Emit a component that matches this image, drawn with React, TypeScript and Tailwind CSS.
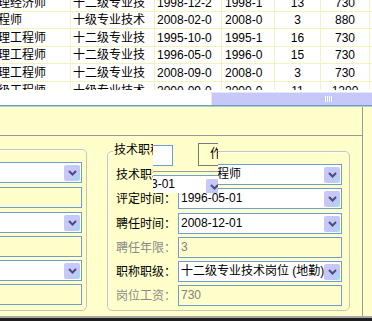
import React from "react";

const rows = [
  ["理经济师", "十二级专业技", "1998-12-2", "1998-1", "13", "730"],
  ["程师", "十级专业技术", "2008-02-0", "2008-0", "3", "880"],
  ["理工程师", "十二级专业技", "1995-10-0", "1995-1", "16", "730"],
  ["理工程师", "十二级专业技", "1996-05-0", "1996-0", "15", "730"],
  ["理工程师", "十二级专业技", "2008-09-0", "2008-0", "3", "730"],
  ["级工程师", "十级专业技术", "2000-09-0", "2000-0", "11", "1200"],
];
const rowH = ["h-[18px]", "h-[17px]", "h-[18px]", "h-[17px]", "h-[18px]", "h-[18px]"];

function DropBtn() {
  return (
    <div className="w-[16px] h-[16px] shrink-0 rounded-[2px] bg-[linear-gradient(135deg,#c9cbf9_0%,#c3c6f7_62%,#9fdcf6_100%)] flex items-center justify-center">
      <svg width="9" height="6" viewBox="0 0 9 6">
        <path d="M1 1 L4.5 4.5 L8 1" stroke="#4c4c7c" strokeWidth="2" fill="none" />
      </svg>
    </div>
  );
}

function Combo({ text, className = "" }: { text?: string; className?: string }) {
  return (
    <div className={"h-[21px] border border-[#6f9dd0] bg-white flex items-center pl-[2px] pr-[1px] " + className}>
      <span className="flex-1 overflow-hidden whitespace-nowrap leading-[19px]">{text}</span>
      <DropBtn />
    </div>
  );
}

function Box({ text, className = "" }: { text?: string; className?: string }) {
  return (
    <div className={"h-[21px] border border-[#6f9dd0] bg-[#ffffcc] flex items-center pl-[2px] text-[#808080] " + className}>
      <span className="leading-[19px]">{text}</span>
    </div>
  );
}

function Label({ text, gray }: { text: string; gray?: boolean }) {
  return (
    <div className={"w-[62px] shrink-0 whitespace-nowrap overflow-hidden " + (gray ? "text-[#8a8a8a]" : "text-black")}>{text}</div>
  );
}

export default function App() {
  return (
    <div className="w-[372px] h-[321px] overflow-hidden relative bg-[#ffffcc] text-[12px] text-black font-['Liberation_Sans','Noto_Sans_CJK_SC',sans-serif]">
      {/* table */}
      <div className="h-[90px] overflow-hidden bg-white">
        <div className="-mt-[6px]">
          {rows.map((r, i) => (
            <div key={i} className={"flex border-b border-[#f2f2bf] " + rowH[i]}>
              <div className="w-[71px] shrink-0 border-r border-[#f2f2bf] overflow-hidden whitespace-nowrap flex items-center">
                <span className="-ml-[2px]">{r[0]}</span>
              </div>
              <div className="w-[84px] shrink-0 border-r border-[#f2f2bf] overflow-hidden whitespace-nowrap flex items-center pl-[2px]">{r[1]}</div>
              <div className="w-[67px] shrink-0 border-r border-[#f2f2bf] overflow-hidden whitespace-nowrap flex items-center pl-[2px]">{r[2]}</div>
              <div className="w-[53px] shrink-0 border-r border-[#f2f2bf] overflow-hidden whitespace-nowrap flex items-center pl-[3px]">{r[3]}</div>
              <div className="w-[46px] shrink-0 border-r border-[#f2f2bf] flex items-center justify-center">{r[4]}</div>
              <div className="w-[49px] shrink-0 border-r border-[#f2f2bf] flex items-center justify-center">{r[5]}</div>
              <div className="flex-1" />
            </div>
          ))}
        </div>
      </div>
      {/* scroll strip */}
      <div className="h-[15px] bg-white pt-[2px] flex">
        <div className="ml-[211px] flex-1 h-[13px] bg-[#c5c8f8] border-l border-t border-[#e4e6fc] flex items-center">
          <div className="ml-[113px] flex gap-[1px]">
            <div className="w-[1px] h-[6px] bg-white" />
            <div className="w-[1px] h-[6px] bg-white" />
            <div className="w-[1px] h-[6px] bg-white" />
            <div className="w-[1px] h-[6px] bg-white" />
          </div>
        </div>
      </div>
      <div className="h-[1px] bg-[#6e9fb6]" />
      <div className="h-[1px] bg-[#a9cfd9]" />
      {/* yellow panel */}
      <div className="flex h-[209px]">
        <div className="w-[363px] shrink-0 border-r border-[#9a9a9a] flex flex-col">
          <div className="h-[29px] border-b border-[#9a9a9a]" />
          <div className="flex-1 flex">
            {/* left groupbox */}
            <div className="-ml-[10px] mt-[13px] w-[97px] h-[162px] border border-[#c6c6b6] rounded-[5px] shadow-[inset_1px_1px_0_#ffffff] pt-[12px] pl-[5px] shrink-0">
              <div className="w-[86px] flex flex-col">
                <Combo />
                <Box className="mt-[4px]" />
                <Combo className="mt-[4px]" />
                <Box className="mt-[3px]" />
                <Combo className="mt-[3px]" />
                <Box className="mt-[3px]" />
              </div>
            </div>
            {/* right groupbox */}
            <div className="ml-[20px] mt-[15px] w-[243px] h-[160px] border border-[#c6c6b6] rounded-[5px] shadow-[inset_1px_1px_0_#ffffff] relative pt-[12px] pl-[8px] shrink-0">
              <span className="absolute left-[5px] -top-[9px] bg-[#ffffcc] leading-[14px] px-[1px]">技术职称</span>
              <div className="flex flex-col">
                <div className="flex items-center">
                  <Label text="技术职称：" />
                  <Combo text="助理工程师" className="w-[164px]" />
                </div>
                <div className="flex items-center mt-[3px]">
                  <Label text="评定时间：" />
                  <Combo text="1996-05-01" className="w-[164px]" />
                </div>
                <div className="flex items-center mt-[4px]">
                  <Label text="聘任时间：" />
                  <Combo text="2008-12-01" className="w-[164px]" />
                </div>
                <div className="flex items-center mt-[3px]">
                  <Label text="聘任年限：" gray />
                  <Box text="3" className="w-[164px]" />
                </div>
                <div className="flex items-center mt-[3px]">
                  <Label text="职称职级：" />
                  <Combo text="十二级专业技术岗位 (地勤)" className="w-[164px]" />
                </div>
                <div className="flex items-center mt-[3px]">
                  <Label text="岗位工资：" gray />
                  <Box text="730" className="w-[164px]" />
                </div>
              </div>
            </div>
          </div>
        </div>
        <div className="flex-1" />
      </div>
      <div className="h-[2px] bg-[#a8a8a8]" />
      <div className="h-[3px] bg-[#1e1e1e]" />

      {/* redraw glitch fragment */}
      <div className="absolute left-[153px] top-[143px] w-[65px] h-[50px] bg-[#ffffcc] overflow-hidden">
        <div className="absolute left-0 top-[2px] w-[20px] h-[21px] bg-white border-t border-r border-b border-[#6f9dd0]" />
        <div className="absolute left-[45px] top-0 w-[25px] h-[23px] border border-[#7a7a7a] overflow-hidden">
          <span className="absolute left-[11px] top-[4px] leading-[12px]">作</span>
        </div>
        <div className="absolute left-0 top-[28px] w-full h-[1px] bg-[#9a9a9a]" />
        <div className="absolute left-0 top-[32px] w-full h-[18px] bg-white border-t border-[#6f9dd0]">
          <span className="absolute -left-[2px] top-[2px] leading-[13px]">3-01</span>
          <div className="absolute left-[53px] top-[3px]">
            <DropBtn />
          </div>
        </div>
      </div>
    </div>
  );
}
